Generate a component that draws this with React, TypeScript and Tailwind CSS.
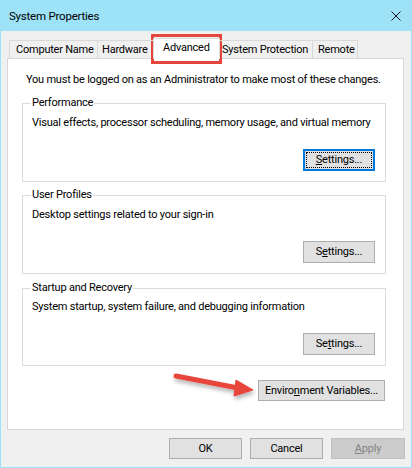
import React from "react";

const font = { fontFamily: 'Roboto, "Segoe UI", sans-serif' };
const T = "text-[11px] leading-[16px] tracking-[-0.22px]";

function Btn({ children, w, h = "h-[21px]" }: { children: React.ReactNode; w: string; h?: string }) {
  return (
    <div className={`${w} ${h} border border-[#adadad] bg-[#e1e1e1] flex items-center justify-center text-black whitespace-nowrap`}>
      {children}
    </div>
  );
}

function Group({ label, desc, btn, pt = "pt-[11px]", focused = false }: { label: string; desc: string; btn: React.ReactNode; pt?: string; focused?: boolean }) {
  return (
    <div className={`relative ml-[14px] w-[364px] border border-[#dcdcdc] ${pt} pb-[10px]`}>
      <span className="absolute -top-[9px] left-[8px] px-[1px] bg-white whitespace-nowrap">{label}</span>
      <div className="pl-[9px] whitespace-nowrap">{desc}</div>
      <div className="flex justify-end pr-[10px] mt-[18px]">
        {focused ? (
          <div className="w-[72px] h-[22px] border-2 border-[#0078d7] bg-[#e1e1e1] p-[1px]">
            <div className="w-full h-full border border-dotted border-black flex items-center justify-center">
              {btn}
            </div>
          </div>
        ) : (
          <Btn w="w-[72px]" h="h-[22px]">{btn}</Btn>
        )}
      </div>
    </div>
  );
}

export default function App() {
  return (
    <div className={`relative w-[412px] h-[468px] bg-[#9de2f7] flex flex-col text-black overflow-hidden ${T}`} style={font}>
      {/* Title bar */}
      <div className="h-[31px] flex items-center justify-between pl-[9px] pr-[11px]">
        <span className="text-[11.5px] mt-[1px]">System Properties</span>
        <svg width="10" height="10" viewBox="0 0 10 10" className="mt-[1px]">
          <path d="M0.5 0.5 L9.5 9.5 M9.5 0.5 L0.5 9.5" stroke="#111" strokeWidth="1" />
        </svg>
      </div>

      {/* Body */}
      <div className="flex-1 mx-[1px] mb-[1px] bg-[#f0f0f0] flex flex-col pt-[7px]">
        {/* Tabs */}
        <div className="relative z-10 flex items-end ml-[8px] -mb-[1px] whitespace-nowrap">
          <div className="w-[88px] h-[18px] mb-[1px] border-l border-t border-[#d9d9d9] pl-[6px] pt-[1px]">Computer Name</div>
          <div className="w-[56px] h-[18px] mb-[1px] border-l border-t border-[#d9d9d9] pl-[4px] pt-[1px]">Hardware</div>
          <div className="w-[67px] h-[21px] border-l border-t border-r border-[#d9d9d9] bg-white pl-[9px] pt-[1px]">Advanced</div>
          <div className="w-[92px] h-[18px] mb-[1px] border-t border-[#d9d9d9] pl-[2px] pt-[1px]">System Protection</div>
          <div className="w-[46px] h-[18px] mb-[1px] border-l border-t border-r border-[#d9d9d9] pl-[5px] pt-[1px]">Remote</div>
        </div>

        {/* Panel */}
        <div className="ml-[6px] w-[397px] h-[372px] border border-[#d9d9d9] bg-white flex flex-col">
          <div className="pl-[18px] pt-[13px] whitespace-nowrap">
            You must be logged on as an Administrator to make most of these changes.
          </div>
          <div className="mt-[15px]">
            <Group
              label="Performance"
              desc="Visual effects, processor scheduling, memory usage, and virtual memory"
              focused
              btn={<span><span className="underline">S</span>ettings...</span>}
            />
          </div>
          <div className="mt-[13px]">
            <Group
              label="User Profiles"
              desc="Desktop settings related to your sign-in"
              btn={<span>S<span className="underline">e</span>ttings...</span>}
            />
          </div>
          <div className="mt-[14px]">
            <Group
              label="Startup and Recovery"
              desc="System startup, system failure, and debugging information"
              pt="pt-[10px]"
              btn={<span>Se<span className="underline">t</span>tings...</span>}
            />
          </div>
          <div className="flex justify-end mt-[14px] mr-[18px]">
            <Btn w="w-[127px]">
              <span>Enviro<span className="underline">n</span>ment Variables...</span>
            </Btn>
          </div>
        </div>

        {/* Bottom buttons */}
        <div className="flex justify-end gap-[8px] mt-[8px] pr-[6px]">
          <Btn w="w-[73px]">OK</Btn>
          <Btn w="w-[73px]">Cancel</Btn>
          <div className="w-[74px] h-[21px] border border-[#bfbfbf] bg-[#cccccc] flex items-center justify-center text-[#838383]">
            <span><span className="underline">A</span>pply</span>
          </div>
        </div>
      </div>

      {/* Red highlight around Advanced tab */}
      <div className="absolute left-[151px] top-[34px] w-[71px] h-[30px] border-[3px] border-[#e5453c] pointer-events-none" />

      {/* Red arrow */}
      <svg className="absolute left-[166px] top-[366px] pointer-events-none" width="100" height="40" viewBox="0 0 100 40">
        <defs>
          <filter id="sh" x="-20%" y="-50%" width="140%" height="200%">
            <feDropShadow dx="1" dy="3" stdDeviation="2" floodColor="#000" floodOpacity="0.3" />
          </filter>
        </defs>
        <g filter="url(#sh)" fill="#e8453c" stroke="#e8453c">
          <line x1="10" y1="10" x2="72" y2="22" strokeWidth="5" strokeLinecap="round" />
          <polygon points="70,14 87,24 68,30" strokeWidth="1" strokeLinejoin="round" />
        </g>
      </svg>
    </div>
  );
}
